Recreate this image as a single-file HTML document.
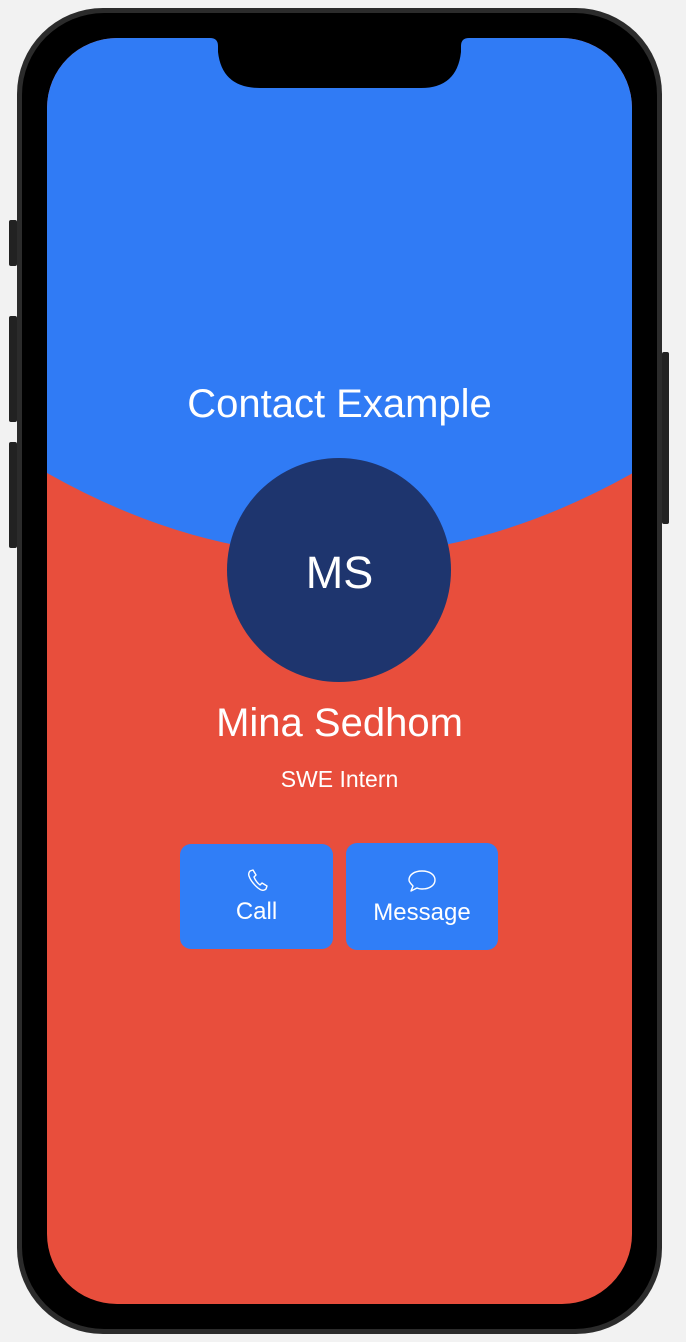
<!DOCTYPE html>
<html><head><meta charset="utf-8"><style>
html,body{margin:0;padding:0;background:#f2f2f2;width:686px;height:1342px;overflow:hidden;font-family:"Liberation Sans",sans-serif}
.abs{position:absolute}
</style></head><body>
<div class="abs" style="left:9px;top:220px;width:8px;height:46px;background:#222;border-radius:2px"></div>
<div class="abs" style="left:9px;top:316px;width:8px;height:106px;background:#222;border-radius:2px"></div>
<div class="abs" style="left:9px;top:442px;width:8px;height:106px;background:#222;border-radius:2px"></div>
<div class="abs" style="left:662px;top:352px;width:7px;height:172px;background:#222;border-radius:2px"></div>
<div class="abs" style="left:17px;top:8px;width:645px;height:1326px;background:#2b2b2b;border-radius:86px"></div>
<div class="abs" style="left:22px;top:13px;width:635px;height:1316px;background:#000;border-radius:82px"></div>
<svg class="abs" style="left:0;top:0" width="686" height="1342">
<defs><clipPath id="s"><rect x="47" y="38" width="585" height="1266" rx="70"/></clipPath></defs>
<g clip-path="url(#s)">
<rect x="40" y="30" width="600" height="1280" fill="#e84e3c"/>
<path d="M40 30 H640 V469 Q339 642 40 469 Z" fill="#307bf5"/>
<path d="M210 30 V38 Q218 38 218 46 V52 Q222 88 260 88 H421 Q457 88 461 52 V46 Q461 38 469 38 V30 Z" fill="#000"/>
</g>
<circle cx="339" cy="570" r="112" fill="#1e356e"/>
<rect x="180" y="844" width="153" height="105" rx="11" fill="#307ef7"/>
<rect x="346" y="843" width="152" height="107" rx="11" fill="#307ef7"/>
<path d="M250 871 l3 -1 l3 5 l-2 2 q2 5 6 8 l2 -2 l5 3 l-1 3 q-3 3 -8 -1 q-7 -6 -9 -12 q-1 -3 1 -5z" fill="none" stroke="#fff" stroke-width="1.4" stroke-linejoin="round"/>
<path d="M422 871 c8 0 13 4 13 9 s-5 9 -13 9 c-2 0 -3 0 -5 -1 l-6 3 l2 -5 c-2 -2 -4 -4 -4 -6 c0 -5 5 -9 13 -9z" fill="none" stroke="#fff" stroke-width="1.4" stroke-linejoin="round"/>
</svg>
<div class="abs" style="left:0;width:679px;top:382px;text-align:center;color:#fff;font-size:40px">Contact Example</div>
<div class="abs" style="left:0;width:679px;top:547px;text-align:center;color:#fff;font-size:45px">MS</div>
<div class="abs" style="left:0;width:679px;top:701px;text-align:center;color:#fff;font-size:40px">Mina Sedhom</div>
<div class="abs" style="left:0;width:679px;top:766px;text-align:center;color:#fff;font-size:23px">SWE Intern</div>
<div class="abs" style="left:180px;width:153px;top:898px;text-align:center;color:#fff;font-size:24px">Call</div>
<div class="abs" style="left:346px;width:152px;top:899px;text-align:center;color:#fff;font-size:24px">Message</div>
</body></html>
